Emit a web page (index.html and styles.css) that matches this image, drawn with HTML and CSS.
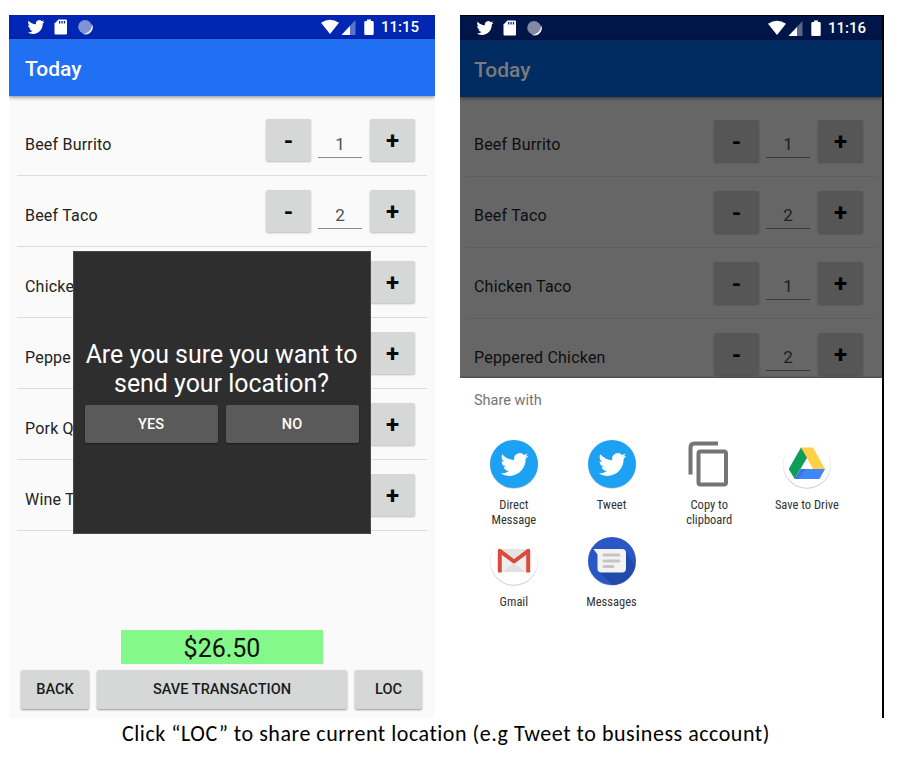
FILE: index.html
```html
<!DOCTYPE html>
<html lang="en">
<head>
<meta charset="utf-8">
<title>Share location</title>
<link rel="stylesheet" href="styles.css">
</head>
<body>
<svg class="defs" width="0" height="0">
  <symbol id="bird" viewBox="0 0 24 24"><path d="M23.953 4.57a10 10 0 01-2.825.775 4.958 4.958 0 002.163-2.723c-.951.555-2.005.959-3.127 1.184a4.92 4.92 0 00-8.384 4.482C7.69 8.095 4.067 6.13 1.64 3.162a4.822 4.822 0 00-.666 2.475c0 1.71.87 3.213 2.188 4.096a4.904 4.904 0 01-2.228-.616v.06a4.923 4.923 0 003.946 4.827 4.996 4.996 0 01-2.212.085 4.936 4.936 0 004.604 3.417 9.867 9.867 0 01-6.102 2.105c-.39 0-.779-.023-1.17-.067a13.995 13.995 0 007.557 2.209c9.053 0 13.998-7.496 13.998-13.985 0-.21 0-.42-.015-.63A9.935 9.935 0 0024 4.59z"/></symbol>
  <symbol id="left-icons" viewBox="0 0 68 18">
    <use href="#bird" x="0.5" y="0.5" width="17" height="17"/>
    <path d="M31.500 1.500h7.500q1 0 1 1V15.500q0 1-1 1H28.500q-1 0-1-1V5.500z"/>
    <path class="slot" d="M32 3h1.300v2.500h-1.300zM34.400 3h1.300v2.500h-1.300zM36.800 3h1.300v2.500h-1.300z"/>
    <circle cx="58" cy="8.700" r="6.800" opacity=".5"/>
    <path d="M64.500 5.500A7 7 0 0 1 55 15.300A8 8 0 0 0 64.500 5.500z"/>
  </symbol>
  <symbol id="right-icons" viewBox="0 0 54 18">
    <path d="M0 4.700Q9-1.300 18 4.700L9 16z"/>
    <path d="M34.500 2V17H20.500z" opacity=".35"/>
    <path d="M29 7.900V17H20.500z"/>
    <path d="M46 1.500h4v1.500h1.500q1.200 0 1.200 1.200V15.800q0 1.200-1.200 1.200h-7q-1.200 0-1.200-1.200V4.200q0-1.200 1.200-1.200H46z"/>
  </symbol>
</svg>

<main class="page">
  <div class="phones">
    <section class="phone">
      <header class="status">
        <svg class="left-icons"><use href="#left-icons"/></svg>
        <svg class="right-icons"><use href="#right-icons"/></svg>
        <span class="time">11:15</span>
      </header>
      <div class="appbar">Today</div>
      <ul class="list">
        <li><span class="name">Beef Burrito</span><b class="btn">-</b><span class="qty">1</span><b class="btn">+</b></li>
        <li><span class="name">Beef Taco</span><b class="btn">-</b><span class="qty">2</span><b class="btn">+</b></li>
        <li><span class="name">Chicke</span><b class="btn">+</b></li>
        <li><span class="name">Peppe</span><b class="btn">+</b></li>
        <li><span class="name">Pork Q</span><b class="btn">+</b></li>
        <li><span class="name">Wine T</span><b class="btn">+</b></li>
      </ul>
      <footer class="bottom">
        <div class="total">$26.50</div>
        <div class="actions">
          <span class="action">BACK</span>
          <span class="action">SAVE TRANSACTION</span>
          <span class="action">LOC</span>
        </div>
      </footer>
      <div class="dialog">
        <p>Are you sure you want to<br>send your location?</p>
        <div class="choices"><span>YES</span><span>NO</span></div>
      </div>
    </section>

    <section class="phone dark">
      <header class="status">
        <svg class="left-icons"><use href="#left-icons"/></svg>
        <svg class="right-icons"><use href="#right-icons"/></svg>
        <span class="time">11:16</span>
      </header>
      <div class="appbar">Today</div>
      <ul class="list">
        <li><span class="name">Beef Burrito</span><b class="btn">-</b><span class="qty">1</span><b class="btn">+</b></li>
        <li><span class="name">Beef Taco</span><b class="btn">-</b><span class="qty">2</span><b class="btn">+</b></li>
        <li><span class="name">Chicken Taco</span><b class="btn">-</b><span class="qty">1</span><b class="btn">+</b></li>
        <li><span class="name">Peppered Chicken</span><b class="btn">-</b><span class="qty">2</span><b class="btn">+</b></li>
      </ul>
      <div class="sheet">
        <h2>Share with</h2>
        <div class="targets">
          <div class="target">
            <svg viewBox="0 0 50 50"><circle class="shade" cx="25" cy="25.800" r="24"/><circle cx="25" cy="25" r="24" fill="#1da1f2"/><use href="#bird" x="11.500" y="11.500" width="28" height="28" fill="#fff"/></svg>
            <span>Direct<br>Message</span>
          </div>
          <div class="target">
            <svg viewBox="0 0 50 50"><circle class="shade" cx="25" cy="25.800" r="24"/><circle cx="25" cy="25" r="24" fill="#1da1f2"/><use href="#bird" x="11.500" y="11.500" width="28" height="28" fill="#fff"/></svg>
            <span>Tweet</span>
          </div>
          <div class="target">
            <svg viewBox="0 0 50 50" fill="none" stroke="#757575" stroke-width="4"><path d="M34 4.500H10.500Q6.500 4.500 6.500 8.500V35.500"/><rect x="14.500" y="12.500" width="27.500" height="33" rx="2"/></svg>
            <span>Copy to<br>clipboard</span>
          </div>
          <div class="target">
            <svg viewBox="0 0 50 50"><circle class="shade" cx="25" cy="25.800" r="24"/><circle cx="25" cy="25" r="23.800" fill="#fff"/><path d="M19 8.500H31L43 30H31z" fill="#ffcf48"/><path d="M19 8.500L25 18.800L12.700 40L6.700 30z" fill="#0f9d58"/><path d="M18.800 30H43L37.500 40H12.700z" fill="#4285f4"/><path d="M18.800 30H24L16 40H12.700z" fill="#3367d6" opacity=".55"/></svg>
            <span>Save to Drive</span>
          </div>
          <div class="target">
            <svg viewBox="0 0 50 50"><circle class="shade" cx="25" cy="25.800" r="24"/><circle cx="25" cy="25" r="23.800" fill="#fff"/><path d="M9 13H41V36H9z" fill="#eee"/><path d="M13 36L25 27L36 36z" fill="#e2e0e0"/><path d="M12 13H38L25 22.500z" fill="#e4e4e4"/><path d="M10.800 36.500V14.800L25 25.500L39.200 14.800V36.500" fill="none" stroke="#dc4a3e" stroke-width="4" stroke-linejoin="round"/></svg>
            <span>Gmail</span>
          </div>
          <div class="target">
            <svg viewBox="0 0 50 50"><circle class="shade" cx="25" cy="25.800" r="24"/><circle cx="25" cy="25" r="24" fill="#2a56c6"/><path d="M12 36L39 16L48.300 30A24 24 0 0 1 26 49z" fill="#214bab"/><path d="M6.500 13H35Q39 13 39 17V32.500Q39 36.500 35 36.500H14.500Q10.500 36.500 10.500 32.500V18.500z" fill="#f3f3f3"/><path d="M17 19H32M17 25H32M17 30.500H26" stroke="#c5c5c5" stroke-width="3" stroke-linecap="round"/></svg>
            <span>Messages</span>
          </div>
        </div>
      </div>
    </section>
  </div>
  <p class="caption"><span>Click “LOC” to share current location (e.g Tweet to business account)</span></p>
</main>
</body>
</html>
```

FILE: styles.css
```css
* { box-sizing: border-box; }
body { margin: 0; background: #fff; font-family: Roboto, "Liberation Sans", sans-serif; }
p, ul, h2 { margin: 0; padding: 0; }
.defs { position: absolute; }
.page { width: 898px; height: 759px; padding: 15px 0 0 9px; overflow: hidden; }
.phones { display: flex; gap: 25px; }

.phone {
  position: relative;
  display: flex;
  flex-direction: column;
  width: 426px;
  height: 703px;
  background: #fafafa;
  overflow: hidden;
}
.status {
  display: flex;
  align-items: center;
  height: 24px;
  flex: none;
  padding: 0 17px 0 18px;
  background: #0027b3;
  fill: #fff;
  color: #fff;
}
.left-icons { width: 68px; height: 18px; margin-top: -1px; }
.slot { fill: #0027b3; }
.right-icons { width: 54px; height: 18px; margin: -1px 6px 0 auto; }
.time { width: 37px; font-size: 15px; font-weight: 500; line-height: 24px; white-space: nowrap; }
.appbar {
  flex: none;
  height: 57px;
  padding-left: 16px;
  background: #216ff3;
  box-shadow: 0 1px 4px rgba(0, 0, 0, .5);
  color: #fff;
  font-size: 21px;
  font-weight: 500;
  line-height: 60px;
}
.list { margin: 9px 8px 0; list-style: none; }
.list li {
  display: flex;
  height: 71px;
  padding: 14px 12px 0 8px;
  border-bottom: 1.500px solid #dcdcdc;
}
.name { flex: 1; font-size: 16px; letter-spacing: .2px; line-height: 51px; color: #222; }
.btn {
  width: 45px;
  height: 42px;
  border-radius: 2px;
  background: #d6d8d7;
  box-shadow: 0 1px 2px rgba(0, 0, 0, .25);
  font-size: 24px;
  font-weight: 700;
  line-height: 45px;
  text-align: center;
  color: #0a0a0a;
}
.qty {
  width: 44px;
  height: 39px;
  margin: 0 8px 0 7px;
  border-bottom: 1.5px solid #8a8a8a;
  font-size: 17px;
  line-height: 50px;
  text-align: center;
  color: #505050;
}

.bottom { margin-top: auto; padding: 0 12px 9px 12px; }
.total {
  width: 202px;
  height: 34px;
  margin: 0 auto 6px 100px;
  background: #84f888;
  font-size: 25px;
  line-height: 38px;
  text-align: center;
  color: #111;
}
.actions { display: grid; grid-template-columns: 68px 250px 67px; gap: 8px; }
.action {
  height: 39px;
  border-radius: 2px;
  background: #d6d8d7;
  box-shadow: 0 1px 2px rgba(0, 0, 0, .4);
  font-size: 14.600px;
  font-weight: 500;
  line-height: 39px;
  text-align: center;
  color: #1c1c1c;
}

.dialog {
  position: absolute;
  left: 63.500px;
  top: 236px;
  width: 298px;
  height: 283px;
  padding: 88px 12px 0;
  border: 1px solid #4a4a4a;
  background: #2e2e2e;
  color: #fff;
}
.dialog p { margin: 0 -10px; font-size: 24.900px; line-height: 29px; text-align: center; white-space: nowrap; }
.choices { display: grid; grid-template-columns: 1fr 1fr; gap: 8px; margin: 7px -1px 0; }
.choices span {
  height: 38px;
  border-radius: 2px;
  background: #5a5a5a;
  box-shadow: 0 1px 2px rgba(0, 0, 0, .4);
  font-size: 14.500px;
  font-weight: 500;
  line-height: 39px;
  text-align: center;
}

.dark { width: 424px; border-top: 1px solid #000; border-right: 2px solid #000; background: #666; }
.dark .status { background: #001548; padding: 0 17px 0 16px; }
.dark .left-icons, .dark .right-icons { margin-top: -1px; }
.dark .time { line-height: 25px; }
.dark .slot { fill: #001548; }
.dark .appbar { padding-left: 14px; background: #002c61; color: #7b7b7b; line-height: 61px; }
.dark .list { margin: 9px 8px 0 7px; }
.dark .list li { padding: 14px 11px 0 7px; border-color: #5c5c5c; }
.dark .name { color: #0e0e0e; line-height: 50px; }
.dark .btn { background: #565656; color: #000; }
.dark .qty { height: 38px; line-height: 49px; color: #202020; border-color: #373737; }
.sheet {
  position: absolute;
  left: 0;
  right: 0;
  bottom: 0;
  height: 340px;
  padding: 12px 14px 0 5px;
  background: #fff;
  box-shadow: 0 -1px 2px rgba(0, 0, 0, .3);
}
.sheet h2 { padding-left: 9px; font-size: 14.500px; font-weight: 400; line-height: 22px; color: #757575; }
.targets {
  display: grid;
  grid-template-columns: repeat(4, 97.700px);
  grid-template-rows: 97px 97px;
  margin-top: 26.500px;
}
.target { display: flex; flex-direction: column; align-items: center; }
.target svg { width: 50px; height: 50px; flex: none; }
.target span {
  margin-top: 8px;
  font-family: "Roboto Condensed", Roboto, sans-serif;
  font-size: 12.500px;
  font-stretch: 75%;
  line-height: 15px;
  text-align: center;
  white-space: nowrap;
  color: #333;
}
.shade { fill: #cfcfcf; }

.caption {
  padding: 0 0 0 113px;
  font-family: Carlito, Lato, sans-serif;
  font-size: 22px;
  letter-spacing: .53px;
  font-variant-ligatures: none;
  line-height: 32px;
  white-space: nowrap;
  color: #000;
}
```
